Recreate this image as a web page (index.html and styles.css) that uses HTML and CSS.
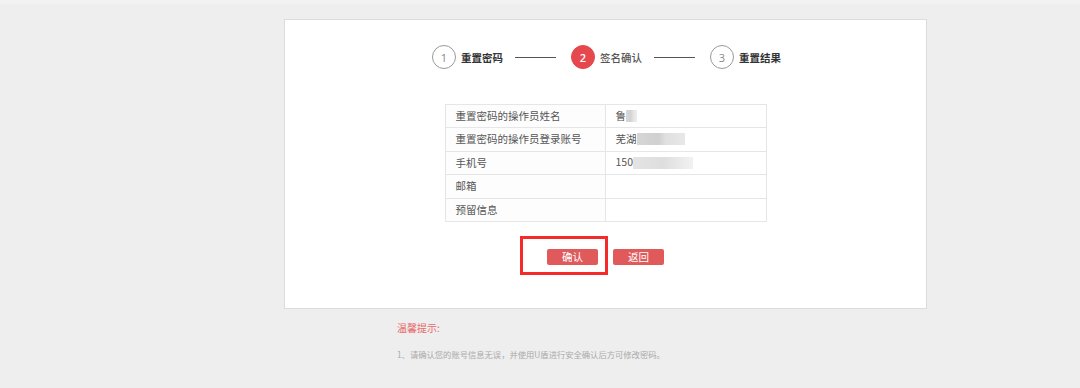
FILE: index.html
```html
<!DOCTYPE html>
<html lang="zh">
<head>
<meta charset="utf-8">
<link rel="stylesheet" href="styles.css">
</head>
<body>
<div class="topstrip"></div>
<div class="page">
  <div class="card">
    <div class="steps">
      <div class="step"><span class="circle">1</span><span class="label">重置密码</span></div>
      <span class="line"></span>
      <div class="step"><span class="circle active">2</span><span class="label label-active">签名确认</span></div>
      <span class="line"></span>
      <div class="step"><span class="circle">3</span><span class="label">重置结果</span></div>
    </div>
    <table class="info">
      <tr><td class="k">重置密码的操作员姓名</td><td class="v">鲁<span class="blur b1"></span></td></tr>
      <tr><td class="k">重置密码的操作员登录账号</td><td class="v">芜湖<span class="blur b2"></span></td></tr>
      <tr><td class="k">手机号</td><td class="v">150<span class="blur b3"></span></td></tr>
      <tr><td class="k">邮箱</td><td class="v"></td></tr>
      <tr><td class="k">预留信息</td><td class="v"></td></tr>
    </table>
    <div class="actions">
      <button class="btn">确认</button>
      <button class="btn">返回</button>
      <span class="highlight"></span>
    </div>
  </div>
  <div class="tips">
    <div class="tips-title">温馨提示:</div>
    <div class="tips-text">1、请确认您的账号信息无误，并使用U盾进行安全确认后方可修改密码。</div>
  </div>
</div>
</body>
</html>
```

FILE: styles.css
```css
* { box-sizing: border-box; }
html, body { margin: 0; padding: 0; }
body {
  background: #eeeeee;
  font-family: "Noto Sans CJK SC", "Noto Sans", sans-serif;
  width: 1080px;
  height: 388px;
  overflow: hidden;
}
.topstrip { height: 4px; background: #f2f2f2; }
.page { padding-left: 284px; padding-top: 15px; }
.card {
  position: relative;
  width: 643px;
  height: 290px;
  background: #fff;
  border: 1px solid #dcdcdc;
  padding-top: 25px;
}
.steps {
  display: flex;
  align-items: center;
  justify-content: center;
  height: 24px;
  padding-left: 2px;
}
.step { display: flex; align-items: center; }
.circle {
  width: 24px; height: 24px;
  border: 1.5px solid #999;
  border-radius: 50%;
  display: flex; align-items: center; justify-content: center;
  font-size: 11px; color: #888;
  font-family: "Open Sans", "Noto Sans", sans-serif;
}
.circle.active { background: #e5484d; border-color: #e5484d; color: #fff; font-weight: 600; }
.label { margin-left: 5px; font-size: 10.5px; color: #333; font-weight: 600; }
.label-active { font-weight: 500; color: #555; }
.line { width: 41px; height: 1px; background: #555; margin: 0 15px 0 12px; }
.info {
  margin: 35px auto 0;
  border-collapse: collapse;
  width: 322px;
  font-size: 10.5px;
  color: #555;
}
.info td {
  border: 1px solid #e6e6e6;
  height: 23.4px;
  padding: 0 0 0 10px;
  vertical-align: middle;
  line-height: 1;
}
.info td.k { width: 160px; background: #fdfdfd; }
.info td.v { padding-left: 10px; }
.blur { display: inline-block; height: 12px; vertical-align: middle; margin-top: -2px;
  background: linear-gradient(90deg, #d8d8d8, #d2d2d2 40%, #e4e4e4 70%, #eeeeee); }
.b1 { width: 11px; }
.b2 { width: 48px; background: linear-gradient(90deg, #d6d6d6, #d0d0d0 45%, #e0e0e0 60%, #e8e8e8); }
.b3 { width: 60px; background: linear-gradient(90deg, #e4e4e4, #dedede 50%, #eaeaea 80%, #f2f2f2); }
.actions {
  position: relative;
  display: flex;
  justify-content: center;
  gap: 15px;
  margin-top: 27px;
}
.btn {
  width: 51px; height: 16px;
  padding: 0;
  border: none;
  border-radius: 2px;
  background: #e05a5c;
  color: #fff;
  font-size: 10.5px;
  font-family: "Noto Sans CJK SC", sans-serif;
  line-height: 16px;
}
.highlight {
  position: absolute;
  left: 235px; top: -13px;
  width: 88px; height: 39px;
  border: 3px solid #f52a2a;
}
.tips { padding-left: 113px; padding-top: 11px; }
.tips-title { color: #e86a6a; font-size: 10px; line-height: 16px; }
.tips-text { color: #aaa; font-size: 8.3px; margin-top: 12px; line-height: 12px; }
```
